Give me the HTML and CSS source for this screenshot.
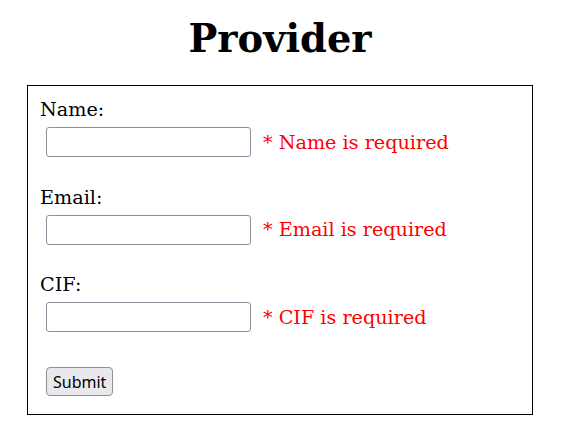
FILE: index.html
```html
<!DOCTYPE html>
<html>
<head>
<meta charset="utf-8">
<link rel="stylesheet" href="styles.css">
</head>
<body>
<h1 class="title">Provider</h1>
<form class="box">
  <div class="field">
    <label class="label" for="name">Name:</label>
    <div class="row">
      <input class="input" id="name" type="text">
      <span class="error">* Name is required</span>
    </div>
  </div>
  <div class="field">
    <label class="label" for="email">Email:</label>
    <div class="row">
      <input class="input" id="email" type="text">
      <span class="error">* Email is required</span>
    </div>
  </div>
  <div class="field">
    <label class="label" for="cif">CIF:</label>
    <div class="row">
      <input class="input" id="cif" type="text">
      <span class="error">* CIF is required</span>
    </div>
  </div>
  <div class="actions">
    <button class="btn" type="submit">Submit</button>
  </div>
</form>
</body>
</html>
```
FILE: styles.css
```css
body {
  margin: 0;
  padding: 0 8px 8px;
  font-family: "DejaVu Serif", serif;
  font-size: 19.2px;
  color: #000;
  background: #fff;
}
.title {
  font-size: 38.4px;
  font-weight: bold;
  text-align: center;
  margin: 0;
  padding: 16px 5px 24px 0;
  line-height: normal;
}
.box {
  width: 480px;
  margin-left: 19px;
  border: 1px solid #000;
  padding: 12px 12px 18px;
  display: flex;
  flex-direction: column;
  gap: 28.5px;
}
.field {
  display: flex;
  flex-direction: column;
  gap: 6px;
}
.label {
  display: block;
  line-height: 23px;
  height: 23px;
}
.row {
  display: flex;
  align-items: center;
  padding-left: 6px;
  gap: 12px;
  height: 30px;
}
.input {
  box-sizing: border-box;
  width: 205px;
  height: 30px;
  margin: 0;
  border: 1px solid #8f8f9d;
  border-radius: 3px;
  background: #fff;
  padding: 1px 4px;
}
.error {
  color: #ff0000;
  line-height: normal;
}
.actions {
  padding-left: 6px;
  padding-top: 6.5px;
}
.btn {
  display: block;
  font-family: "Noto Sans", sans-serif;
  font-size: 16px;
  color: #000;
  background: #e9e9ed;
  border: 1px solid #8f8f9d;
  border-radius: 4px;
  padding: 2px 6px;
  height: 29px;
  box-sizing: border-box;
  margin: 0;
}
```
